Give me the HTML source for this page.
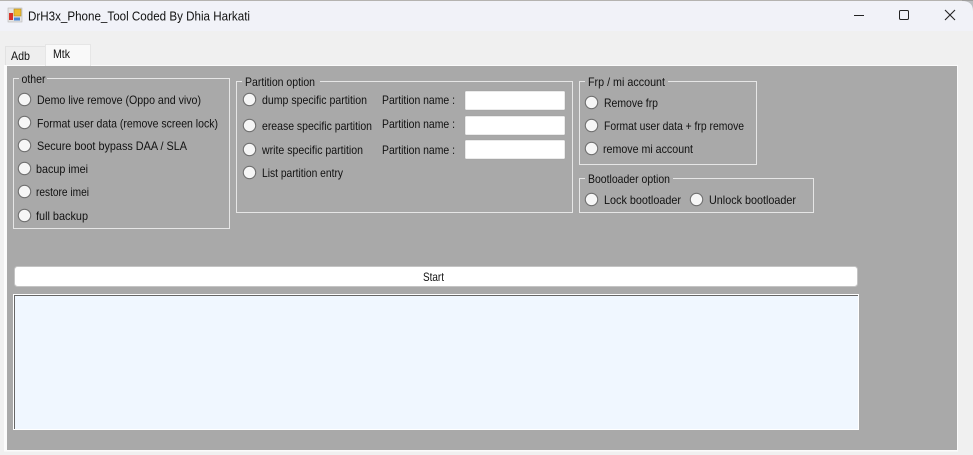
<!DOCTYPE html>
<html><head><meta charset="utf-8"><style>
html,body{margin:0;padding:0;width:973px;height:455px;overflow:hidden;background:#f0f0f0}
svg{display:block}
text{font-family:"Liberation Sans",sans-serif;font-size:12px;fill:#111}
.r{fill:#f6f6f6;stroke:#707070;stroke-width:1.1}
.b{fill:none;stroke:#e6e6e6;stroke-width:1}
.l{fill:#a9a9a9}
</style></head><body>
<svg width="973" height="455" viewBox="0 0 973 455" xmlns="http://www.w3.org/2000/svg">
<rect width="973" height="455" fill="#f0f0f0"/>
<rect width="973" height="31" fill="#f1f2f8"/>
<rect width="973" height="1" fill="#b5b3b0"/>
<path d="M962 0H973V11Q973 1 962 1Z" fill="#8a8a8a" opacity=".5"/>
<rect x="8" y="8" width="14" height="14" fill="#e4e4e4" stroke="#b8b8b8" stroke-width=".6"/>
<rect x="9" y="13" width="4" height="7" fill="#d8322a"/>
<rect x="14" y="9" width="7" height="7" fill="#eebb30" stroke="#b08a20" stroke-width=".6"/>
<rect x="14" y="17.5" width="6" height="3" fill="#4a88d8"/>
<text x="28" y="20.5" style="font-size:12.5px" textLength="222" lengthAdjust="spacingAndGlyphs">DrH3x_Phone_Tool Coded By Dhia Harkati</text>
<rect x="854" y="15" width="10" height="1" fill="#222"/>
<rect x="899.5" y="10.5" width="9" height="9" rx="1.2" fill="none" stroke="#222" stroke-width="1"/>
<path d="M945 10L955 20M955 10L945 20" stroke="#222" stroke-width="1.1" fill="none"/>

<rect x="5.5" y="46.5" width="40" height="20" fill="#eeeeee" stroke="#e2e2e2"/>
<rect x="4" y="65" width="954" height="386.5" fill="#fbfbfb"/>
<rect x="45.5" y="44.5" width="45" height="22" fill="#f9f9f9" stroke="#e6e6e6"/>
<rect x="7" y="66" width="950" height="384" fill="#a9a9a9"/>
<text x="11" y="60" textLength="19" lengthAdjust="spacingAndGlyphs">Adb</text>
<text x="53" y="58" textLength="17" lengthAdjust="spacingAndGlyphs">Mtk</text>

<rect class="b" x="13.5" y="78.5" width="216" height="150"/>
<rect class="l" x="19" y="74" width="28" height="9"/>
<text x="21.5" y="83" textLength="24" lengthAdjust="spacingAndGlyphs">other</text>
<circle class="r" cx="24.5" cy="99.5" r="6.2"/>
<text x="37" y="104" textLength="164" lengthAdjust="spacingAndGlyphs">Demo live remove (Oppo and vivo)</text>
<circle class="r" cx="24.5" cy="122.5" r="6.2"/>
<text x="37" y="127.5" textLength="181" lengthAdjust="spacingAndGlyphs">Format user data (remove screen lock)</text>
<circle class="r" cx="24.5" cy="145.5" r="6.2"/>
<text x="37" y="150" textLength="150" lengthAdjust="spacingAndGlyphs">Secure boot bypass DAA / SLA</text>
<circle class="r" cx="24.5" cy="168.5" r="6.2"/>
<text x="36" y="173" textLength="52" lengthAdjust="spacingAndGlyphs">bacup imei</text>
<circle class="r" cx="24.5" cy="191.5" r="6.2"/>
<text x="36" y="196" textLength="53" lengthAdjust="spacingAndGlyphs">restore imei</text>
<circle class="r" cx="24.5" cy="215.5" r="6.2"/>
<text x="36" y="220" textLength="52" lengthAdjust="spacingAndGlyphs">full backup</text>

<rect class="b" x="236.5" y="81.5" width="336" height="131"/>
<rect class="l" x="242" y="76" width="78" height="10"/>
<text x="245" y="86" textLength="70" lengthAdjust="spacingAndGlyphs">Partition option</text>
<circle class="r" cx="249.5" cy="99.5" r="6.2"/>
<text x="262" y="104" textLength="105" lengthAdjust="spacingAndGlyphs">dump specific partition</text>
<text x="382" y="104" textLength="73" lengthAdjust="spacingAndGlyphs">Partition name :</text>
<rect x="465" y="91" width="100" height="19" rx="1" fill="#fff" stroke="#999" stroke-width=".4"/>
<circle class="r" cx="249.5" cy="125.5" r="6.2"/>
<text x="262" y="130" textLength="110" lengthAdjust="spacingAndGlyphs">erease specific partition</text>
<text x="382" y="128" textLength="73" lengthAdjust="spacingAndGlyphs">Partition name :</text>
<rect x="465" y="116" width="100" height="19" rx="1" fill="#fff" stroke="#999" stroke-width=".4"/>
<circle class="r" cx="249.5" cy="149.5" r="6.2"/>
<text x="262" y="154" textLength="101" lengthAdjust="spacingAndGlyphs">write specific partition</text>
<text x="382" y="154" textLength="73" lengthAdjust="spacingAndGlyphs">Partition name :</text>
<rect x="465" y="140" width="100" height="19" rx="1" fill="#fff" stroke="#999" stroke-width=".4"/>
<circle class="r" cx="249.5" cy="172.5" r="6.2"/>
<text x="262" y="177" textLength="81" lengthAdjust="spacingAndGlyphs">List partition entry</text>

<rect class="b" x="579.5" y="81.5" width="177" height="83"/>
<rect class="l" x="585" y="76" width="83" height="10"/>
<text x="588" y="86" textLength="77" lengthAdjust="spacingAndGlyphs">Frp / mi account</text>
<circle class="r" cx="591.5" cy="102.5" r="6.2"/>
<text x="604" y="107" textLength="54" lengthAdjust="spacingAndGlyphs">Remove frp</text>
<circle class="r" cx="591.5" cy="125.5" r="6.2"/>
<text x="604" y="130" textLength="140" lengthAdjust="spacingAndGlyphs">Format user data + frp remove</text>
<circle class="r" cx="591.5" cy="148.5" r="6.2"/>
<text x="603" y="153" textLength="90" lengthAdjust="spacingAndGlyphs">remove mi account</text>

<rect class="b" x="579.5" y="178.5" width="234" height="34"/>
<rect class="l" x="585" y="173" width="88" height="10"/>
<text x="588" y="183" textLength="82" lengthAdjust="spacingAndGlyphs">Bootloader option</text>
<circle class="r" cx="591.5" cy="199.5" r="6.2"/>
<text x="604" y="204" textLength="77" lengthAdjust="spacingAndGlyphs">Lock bootloader</text>
<circle class="r" cx="696.5" cy="199.5" r="6.2"/>
<text x="709" y="204" textLength="87" lengthAdjust="spacingAndGlyphs">Unlock bootloader</text>

<rect x="14.5" y="266.5" width="843" height="20" rx="3" fill="#fff" stroke="#c4c4c4"/>
<text x="423" y="281" textLength="21" lengthAdjust="spacingAndGlyphs">Start</text>

<rect x="13" y="294" width="846" height="136" fill="#fff"/>
<rect x="14" y="295" width="844" height="134" fill="#666"/>
<rect x="15" y="296" width="843" height="133" fill="#f0f7ff"/>
</svg>
</body></html>
